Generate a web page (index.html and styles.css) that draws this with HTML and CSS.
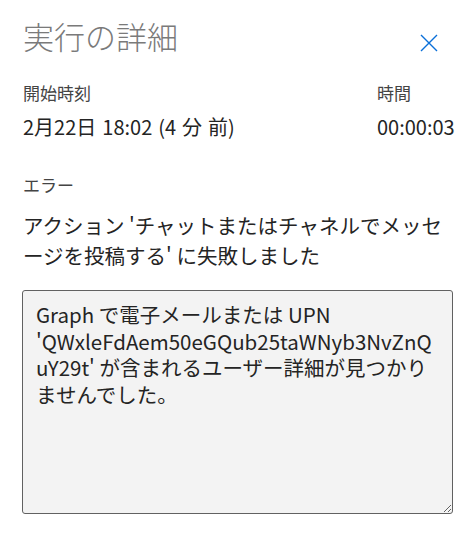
FILE: index.html
```html
<!DOCTYPE html>
<html lang="ja">
<head>
<meta charset="utf-8">
<link rel="stylesheet" href="styles.css">
</head>
<body>
<div class="panel">
  <div class="header">
    <h1 class="title">実行の詳細</h1>
    <button class="close" aria-label="閉じる">
      <svg width="18" height="18" viewBox="0 0 18 18"><path d="M1 1 L17 17 M17 1 L1 17" stroke="#0a6fd8" stroke-width="1.4" fill="none"/></svg>
    </button>
  </div>
  <div class="meta">
    <div class="col">
      <div class="label">開始時刻</div>
      <div class="value">2月22日 18:02 (4 分 前)</div>
    </div>
    <div class="col col-right">
      <div class="label">時間</div>
      <div class="value">00:00:03</div>
    </div>
  </div>
  <div class="label err-label">エラー</div>
  <div class="err-msg">アクション 'チャットまたはチャネルでメッセージを投稿する' に失敗しました</div>
  <textarea class="details" readonly>Graph で電子メールまたは UPN 'QWxleFdAem50eGQub25taWNyb3NvZnQuY29t' が含まれるユーザー詳細が見つかりませんでした。</textarea>
</div>
</body>
</html>
```
FILE: styles.css
```css
html, body {
  margin: 0;
  padding: 0;
  background: #ffffff;
}
body {
  font-family: "Noto Sans CJK JP", "Noto Sans", sans-serif;
  color: #242424;
}
.panel {
  padding: 14px 23px 0 23px;
  display: flex;
  flex-direction: column;
}
.header {
  display: flex;
  justify-content: space-between;
  align-items: flex-start;
}
.title {
  margin: 0;
  font-weight: 300;
  font-size: 31px;
  line-height: 44px;
  color: #7a7a7a;
}
.close {
  border: none;
  background: none;
  padding: 0;
  margin: 20px 15px 0 0;
  width: 18px;
  height: 18px;
  display: block;
}
.close svg { display: block; }
.meta {
  display: flex;
  justify-content: space-between;
  margin-top: 24px;
}
.col-right { width: 76px; }
.label {
  font-size: 17px;
  line-height: 22px;
  color: #444;
}
.value {
  margin-top: 9px;
  font-size: 20px;
  line-height: 28px;
  word-spacing: 1.5px;
  color: #242424;
}
.err-label {
  margin-top: 33px;
}
.err-msg {
  margin-top: 14px;
  font-size: 20.5px;
  line-height: 30px;
  color: #242424;
}
.details {
  margin: 20px 0 0 -1px;
  box-sizing: border-box;
  width: 431px;
  height: 224px;
  padding: 10px 16px 6px 13px;
  background: #f3f3f3;
  border: 1px solid #616161;
  border-radius: 3px;
  font-family: "Noto Sans CJK JP", "Noto Sans", sans-serif;
  font-size: 20.5px;
  line-height: 26.5px;
  color: #242424;
  resize: both;
  outline: none;
}
```
